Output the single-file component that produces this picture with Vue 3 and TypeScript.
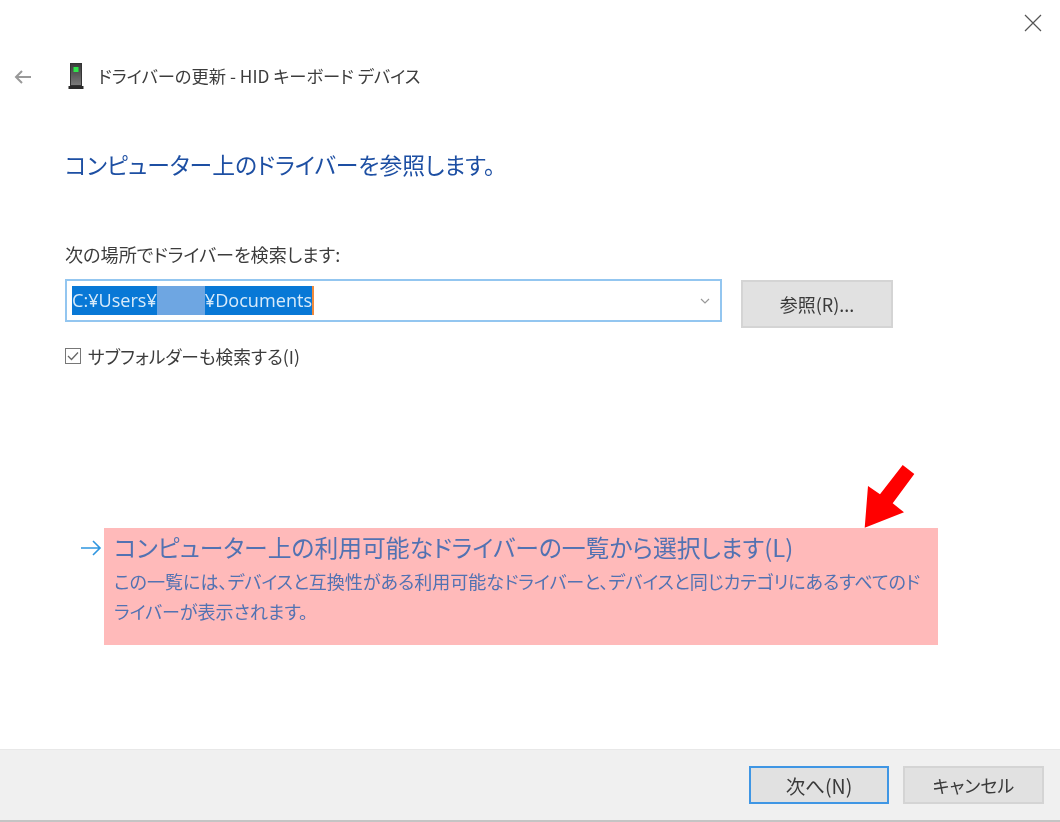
<script setup lang="ts">
const title = 'ドライバーの更新 - HID キーボード デバイス'
const heading = 'コンピューター上のドライバーを参照します。'
const linkTitle = 'コンピューター上の利用可能なドライバーの一覧から選択します(L)'
const linkDesc = 'この一覧には、デバイスと互換性がある利用可能なドライバーと、デバイスと同じカテゴリにあるすべてのドライバーが表示されます。'
</script>

<template>
  <div class="dialog">
    <div class="close-row">
      <svg class="close" width="18" height="18" viewBox="0 0 18 18" aria-label="閉じる">
        <path d="M1 1 L17 17 M17 1 L1 17" stroke="#555" stroke-width="1.2" fill="none" />
      </svg>
    </div>

    <header class="title-row">
      <svg class="back" width="18" height="14" viewBox="0 0 18 14">
        <path d="M17 7 H2 M8 1 L2 7 L8 13" stroke="#999" stroke-width="2" fill="none" />
      </svg>
      <svg class="device" width="16" height="27" viewBox="0 0 16 27">
        <defs>
          <linearGradient id="body" x1="0" y1="0" x2="0" y2="1">
            <stop offset="0" stop-color="#3c3c3c" />
            <stop offset="1" stop-color="#7a7a7a" />
          </linearGradient>
        </defs>
        <rect x="2" y="0" width="12" height="23" fill="#333" />
        <rect x="3" y="1" width="10" height="21" fill="url(#body)" />
        <rect x="5.5" y="4" width="5" height="5" fill="#2fe64a" />
        <rect x="0.5" y="23" width="15" height="3" fill="#2a2a2a" />
      </svg>
      <span class="title">{{ title }}</span>
    </header>

    <h1 class="heading">{{ heading }}</h1>

    <p class="label">次の場所でドライバーを検索します:</p>

    <div class="path-row">
      <div class="combo">
        <div class="selection">
          <span>C:¥Users¥</span><span class="masked"></span><span>¥Documents</span>
        </div>
        <svg class="chevron" width="10" height="6" viewBox="0 0 10 6">
          <path d="M1 1 L5 5 L9 1" stroke="#999" stroke-width="1.2" fill="none" />
        </svg>
      </div>
      <button class="btn browse" type="button">参照(R)...</button>
    </div>

    <label class="check-row">
      <svg class="check" width="16" height="16" viewBox="0 0 16 16">
        <rect x="0.5" y="0.5" width="15" height="15" fill="#fff" stroke="#777" />
        <path d="M3 8 L6.5 11.5 L13 4.5" stroke="#666" stroke-width="1.3" fill="none" />
      </svg>
      <span>サブフォルダーも検索する(I)</span>
    </label>

    <section class="link-row">
      <svg class="link-arrow" width="22" height="16" viewBox="0 0 22 16">
        <path d="M1 8 H20 M13 1 L20 8 L13 15" stroke="#2f96e0" stroke-width="1.6" fill="none" />
      </svg>
      <div class="link-box">
        <div class="link-title">{{ linkTitle }}</div>
        <div class="link-desc">{{ linkDesc }}</div>
      </div>
    </section>

    <footer class="footer">
      <button class="btn next" type="button">次へ(N)</button>
      <button class="btn cancel" type="button">キャンセル</button>
    </footer>

    <svg class="red-arrow" width="60" height="70" viewBox="860 460 60 70">
      <polygon points="864.7,527.7 868,486 880,494.3 902.7,465 914.3,474 892.7,503.3 904,512.3" fill="#ff0000" />
    </svg>
  </div>
</template>

<style>
html, body { margin: 0; background: #fff; }
</style>

<style scoped>
.dialog {
  position: relative;
  width: 1060px;
  height: 822px;
  display: flex;
  flex-direction: column;
  overflow: hidden;
  background: #fff;
  color: #333;
  font-family: "Noto Sans CJK JP", "Open Sans", sans-serif;
  font-feature-settings: "palt";
  filter: blur(0.3px);
}
.close-row {
  display: flex;
  justify-content: flex-end;
  padding: 14px 18px 0 0;
  height: 32px;
  box-sizing: border-box;
}
.title-row {
  display: flex;
  align-items: center;
  height: 27px;
  margin-top: 31px;
  padding-left: 14px;
}
.back { margin-right: 36px; }
.device { margin-right: 14px; }
.title { font-size: 17.3px; color: #3c3c3c; line-height: 25px; margin-bottom: 2px; white-space: nowrap; }
.heading {
  margin: 59px 0 0 65px;
  font-size: 22.8px;
  line-height: 32px;
  font-weight: 400;
  color: #1d4fa3;
  white-space: nowrap;
}
.label {
  margin: 61px 0 0 65px;
  font-size: 18.1px;
  line-height: 24px;
  color: #3c3c3c;
}
.path-row {
  display: flex;
  align-items: flex-start;
  gap: 19px;
  margin: 13px 0 0 65px;
}
.combo {
  width: 657px;
  height: 43px;
  box-sizing: border-box;
  border: 2px solid #93c6f0;
  display: flex;
  align-items: center;
  justify-content: space-between;
  padding: 0 10px 0 5px;
}
.selection {
  display: flex;
  align-items: center;
  height: 29px;
  background: #0878d6;
  color: #d8ebfa;
  border-right: 2px solid #f08a3c;
  font-family: "Open Sans", "Noto Sans CJK JP", sans-serif;
  font-size: 18.1px;
  line-height: 27px;
  padding-bottom: 0;
  white-space: nowrap;
}
.masked { width: 48px; height: 29px; background: #6ea6e2; }
.btn {
  box-sizing: border-box;
  background: #e1e1e1;
  border: 2px solid #d4d4d4;
  color: #3a3a3a;
  font-family: inherit;
  font-feature-settings: inherit;
  font-size: 18px;
  padding: 0;
}
.browse { width: 152px; height: 48px; margin-top: 1px; }
.check-row {
  display: flex;
  align-items: center;
  gap: 7px;
  margin: 15px 0 0 65px;
  height: 26px;
  font-size: 17.7px;
  color: #3c3c3c;
}
.link-row {
  display: flex;
  align-items: flex-start;
  margin: 159px 0 0 80px;
}
.link-arrow { margin: 12px 2px 0 0; }
.link-box {
  width: 834px;
  height: 117px;
  box-sizing: border-box;
  padding: 1px 14px 0 10px;
  background: #ffbaba;
  color: #5272b2;
}
.link-title { font-size: 23.8px; line-height: 36px; white-space: nowrap; }
.link-desc { font-size: 18.05px; line-height: 30px; margin-top: 1px; }
.footer {
  margin-top: auto;
  height: 73px;
  box-sizing: border-box;
  background: #f0f0f0;
  border-top: 1px solid #e8e8e8;
  border-bottom: 2px solid #c4c4c4;
  display: flex;
  justify-content: flex-end;
  gap: 14px;
  padding: 16px 16px 0 0;
}
.next { width: 140px; height: 38px; border-color: #3f96e4; font-size: 19.5px; }
.cancel { width: 141px; height: 38px; }
.red-arrow { position: absolute; left: 860px; top: 460px; }
</style>
